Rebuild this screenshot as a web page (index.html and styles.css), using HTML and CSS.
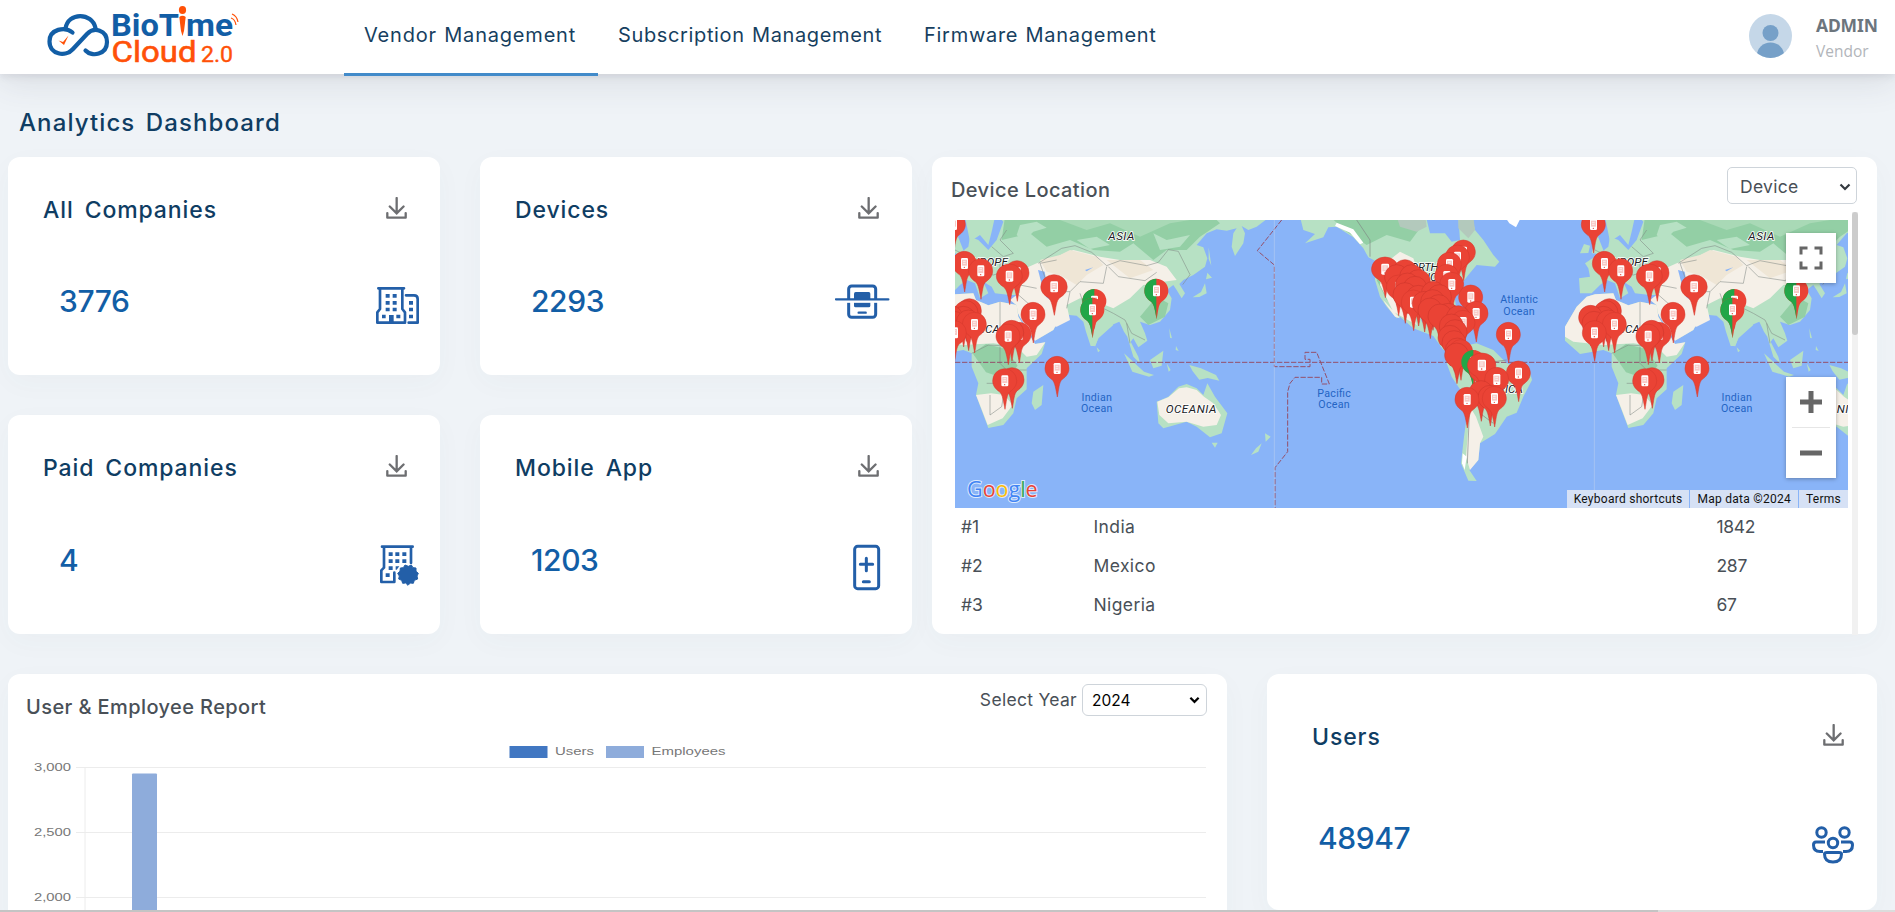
FILE: index.html
```html
<!DOCTYPE html>
<html lang="en">
<head>
<meta charset="utf-8">
<title>BioTime Cloud 2.0</title>
<link rel="stylesheet" href="styles.css">
</head>
<body>
<svg class="defs" width="0" height="0">
  <defs>
    <symbol id="download" viewBox="0 0 63 67">
      <path d="M32 3v46M11 29l21 21 21-21" fill="none" stroke="#6d6e71" stroke-width="7" stroke-linecap="round"/>
      <path d="M3.500 49v14h56V49" fill="none" stroke="#6d6e71" stroke-width="7" stroke-linecap="round" stroke-linejoin="round"/>
    </symbol>
    <g id="phone"><rect x="-10" y="-16" width="21" height="33" rx="4" fill="#fff"/><rect x="-7" y="-11" width="15" height="18" fill="#f8c9c5"/><path d="M-4-6h8M-4 0h8" stroke="#fff" stroke-width="2"/><circle cy="12" r="2" fill="#ea4335"/></g>
    <path id="drop" d="M-36 0a36 36 0 0 1 72 0c0 16-9 25-20 33C6 40 5 66 1 86-3 66-6 40-16 33-27 25-36 16-36 0z"/>
    <g id="pin"><use href="#drop" fill="#ea4335" stroke="#d5382c" stroke-width="1.5"/><use href="#phone"/></g>
    <g id="dot"><use href="#drop" fill="#ea4335" stroke="#c9352a" stroke-width="1.5"/></g>
    <clipPath id="lefthalf"><rect x="-40" y="-40" width="40" height="130"/></clipPath>
    <g id="split"><use href="#drop" fill="#ea4335"/><use href="#drop" fill="#22a648" clip-path="url(#lefthalf)"/><use href="#phone"/></g>
    <g id="oldworld">
      <path fill="#b7e1c4" d="M1050 200L1010 230 985 240 965 228 975 250 970 280 945 318 935 290 940 250 950 235 920 242 890 238 860 250 830 285 850 292 862 325 855 350 820 375 790 390 778 402 795 430 785 445 770 420 760 405 740 420 755 445 750 480 720 515 690 525 660 515 675 550 682 572 655 592 640 565 632 575 655 620 660 640 640 620 622 560 612 545 598 515 575 525 535 565 525 588 512 588 498 545 490 515 470 497 420 492 390 470 350 450 340 448 375 490 415 512 400 540 345 572 300 500 285 470 300 455 300 435 270 435 225 430 215 410 190 395 205 430 180 445 165 400 140 390 120 405 95 430 60 430 57 385 90 380 85 355 75 340 120 310 145 290 150 260 175 270 205 300 230 270 250 215 235 200z"/>
      <path fill="#b7e1c4" d="M135 200L150 275 180 255 205 285 215 245 225 200zM60 310l12-28 18 5-5 22zM95 310l15-60 20 50-10 12z"/>
      <path fill="#93cfa5" d="M255 200L245 270 330 250 380 290 450 270 520 300 600 305 640 280 700 330 740 300 800 300 840 260 900 220 880 200zM660 500l50-60 35 20-10 40-50 25z"/>
      <path fill="#a9d9b6" d="M420 210l80 30 70-20 90 40 90-40 60-10-120-10z"/>
      <path fill="#b7e1c4" d="M300 225l50-10 30 18-40 12-30 30-20-20zM470 270l60-10 40 25-60 12zM700 250l40 20 70-15-30 35-60 10z"/>
      <path fill="#f5f0e8" d="M350 340l60-20 50-20 80 20 60 10 90 0 50 20 30 40-40 5-60 10-40 40-50 30-50-20-50-10-40 20 10 45-40 20-60-10-30-30-50-40 40-30-30-20-20-20z"/>
      <path fill="#f5f0e8" d="M300 405l60 10 30 45-40-8-10 0 35 38 40 22-15 28-55 32-45-70-15-30 15-20z"/>
      <path fill="#efe6d6" d="M360 330l60-15 30-15 80 20 20 25-50 30-30 30-50-30-40-10zM560 330l100 0 40 30-70 25z"/>
      <path fill="#b7e1c4" d="M500 520l15-60 50 40 15 25-45 40-10 25z"/>
      <path fill="#b7e1c4" d="M80 440L105 433 160 430 168 450 205 466 240 455 290 465 295 500 345 582 376 577 365 612 320 655 320 718 290 745 280 790 250 825 205 834 180 768 168 735 175 700 155 650 155 610 130 600 60 612 15 572 15 530 50 470z"/>
      <path fill="#f5f0e8" d="M80 440L105 433 160 430 168 450 205 466 240 455 290 465 295 500 345 582 376 577 350 615 320 620 290 590 220 580 130 585 40 575 15 560 15 530 50 470zM168 735l45-5 40 5 25 30-30 40-45 20-23-60z"/>
      <path fill="#93cfa5" d="M158 610l40-28 60 15 35 50-35 40-60-20z"/>
      <path fill="#89b4f8" d="M354 360l20 5 5 30 12 55-12-8-18-55zM495 360l25-8-20 12z"/>
      <path fill="#b7e1c4" d="M370 705l-5 60-20 15-10-20 5-35zM612 610l60 55 30 10-15 5-50-15zM690 630l40-28-5 45-25 8zM740 640l12 20-6 5zM808 645l35 10 45 20 10 17-35-8-25 5-20-25zM748 535l8 30-6-2zM768 588l8 15-9-3zM855 400l5 30-22 11-20 1 25-16zM862 368l14 15-18 5zM530 592l10 10-6 5zM875 878l18 0-8 15zM1035 850l17 10-15 15zM1025 880l-10 25-22 10 15-20zM866 292l8 55-8-20z"/>
      <path fill="#b7e1c4" d="M710 755L745 740 775 710 800 702 830 715 850 735 862 700 885 740 922 790 905 850 870 862 830 830 800 815 730 835 715 820 712 780z"/>
      <path fill="#f5f0e8" d="M712 755L745 742 777 715 800 712 830 720 852 740 880 760 903 795 890 825 850 830 800 815 745 820 718 795z"/>
      <path fill="none" stroke="#7e8783" stroke-width="2" opacity=".8" d="M355 340l70-45 40-8 50 20 45 40 40-15 80 15 35-10 30-38 30 5 20 40 15 30-22 30M565 350l30 30 80 12 35-25M410 330l-50 10 30 85 60 0 30-30 70 5 10-50M450 425l-10 50M480 430l20 60 20-30 60 30 35 20 20 40 40 20M620 520l10 60M155 610l50-25 90 5M240 455v85M200 700l55 0 35-40 30 0M210 735l0 60M250 740l-5 30-35 25M240 590l0 50 40 40M300 405l50 10M290 430l40 35M215 290l35 30 30-10M240 320l0 60M160 360l60 15 50-15M105 300l60 30M260 240l-20 30 40 40"/>
      <g class="place"><text x="604" y="269" textLength="78">ASIA</text><text x="200" y="349" textLength="128">EUROPE</text><text x="180" y="548" textLength="120">AFRICA</text><text x="813" y="788" textLength="152">OCEANIA</text></g>
      <g class="sea"><text x="530" y="754" textLength="91">Indian</text><text x="530" y="786" textLength="94">Ocean</text></g>
    </g>
    <g id="oldpins">
      <use href="#pin" x="100" y="223"/><use href="#pin" x="133" y="340"/><use href="#pin" x="182" y="362"/><use href="#pin" x="291" y="368"/><use href="#pin" transform="translate(268 378) scale(1.08 1)"/>
      <use href="#pin" transform="translate(402 410) scale(1.1 1)"/><use href="#pin" x="339" y="493"/>
      <use href="#dot" x="148" y="482"/><use href="#dot" x="138" y="488"/><use href="#dot" x="130" y="505"/><use href="#dot" x="92" y="502"/><use href="#dot" x="102" y="520"/><use href="#dot" x="145" y="516"/><use href="#pin" x="163" y="523"/><use href="#pin" x="103" y="548"/>
      <use href="#pin" x="297" y="553"/><use href="#dot" x="275" y="547"/><use href="#pin" x="264" y="558"/><use href="#pin" x="411" y="655"/><use href="#dot" x="276" y="689"/><use href="#pin" x="254" y="692"/>
      <use href="#split" x="523" y="453"/><use href="#split" x="517" y="479"/><use href="#split" x="709" y="422"/>
    </g>
  </defs>
</svg>

<header class="topbar">
  <svg class="logo" width="204" height="66" viewBox="40 4 204 66">
    <g fill="none" stroke="#125ea6" stroke-width="4.2" stroke-linecap="round">
      <path d="M72.500 32.500C65 26 49.500 29 49.500 41.500 49.500 54.500 65.500 57.500 73 49L87 34C94 26.500 107 30 107 42 107 54.500 92 57.500 85.500 50.500"/>
      <path d="M65.500 28.500C68 12 92 12 95.500 28"/>
    </g>
    <path d="M58.500 40.500l4.500 1.500 5.500-6.500-4.500 9.500z" fill="#ff5108"/>
    <text class="logo-bio" x="111" y="36" textLength="68" lengthAdjust="spacingAndGlyphs">BioT</text>
    <text class="logo-bio" x="186" y="36" textLength="47" lengthAdjust="spacingAndGlyphs">me</text>
    <ellipse cx="182.500" cy="10" rx="3.600" ry="4" fill="#ff5108"/><path d="M179.300 17q3.200-2.500 6.400 0l-1.700 14-1.500 5-1.500-5z" fill="#ff5108"/>
    <path d="M231 18q4 1 5 7M232 14q5 2 6 8" fill="none" stroke="#ff5108" stroke-width="1.200"/>
    <text class="logo-cloud" x="111.500" y="61.500" textLength="85" lengthAdjust="spacingAndGlyphs">Cloud</text>
    <text class="logo-version" x="201" y="61.500" textLength="32" lengthAdjust="spacingAndGlyphs">2.0</text>
  </svg>
  <nav class="nav">
    <a class="nav-link active">Vendor Management</a>
    <a class="nav-link n2">Subscription Management</a>
    <a class="nav-link n3">Firmware Management</a>
  </nav>
  <div class="account">
    <svg width="43" height="44" viewBox="0 0 43 44"><defs><clipPath id="face"><ellipse cx="21.500" cy="22" rx="21.500" ry="22"/></clipPath></defs><g clip-path="url(#face)"><path fill="#c5d7e8" d="M0 0h43v44H0z"/><circle cx="21.500" cy="19" r="8" fill="#76a0c8"/><ellipse cx="21.500" cy="41" rx="13.500" ry="12.500" fill="#76a0c8"/></g></svg>
    <div><div class="account-name">ADMIN</div><div class="account-role">Vendor</div></div>
  </div>
</header>

<main>
  <h1 class="page-title">Analytics Dashboard</h1>
  <div class="overview">
    <section class="card stat">
      <div class="stat-head"><h2>All Companies</h2><svg class="dl" width="21" height="22"><use href="#download"/></svg></div>
      <div class="stat-body"><span class="value">3776</span>
        <svg width="60" height="52" viewBox="1089 398 180 156"><g fill="none" stroke="#235fa8" stroke-width="8" stroke-linejoin="round" stroke-linecap="round"><path d="M1135 414H1212M1140 416v60l-8 10v31h83v-31l-8-10v-60"/><path d="M1218 435h24q11 0 11 11v71h-27"/></g><path fill="#235fa8" d="M1157 431h12v11h-12zM1178 431h12v11h-12zM1157 452h12v11h-12zM1178 452h12v11h-12zM1157 472h12v11h-12zM1178 472h12v11h-12zM1146 493h11v11h-11zM1189 493h12v11h-12zM1167 494h14v23h-14zM1227 452h12v11h-12zM1227 472h12v11h-12zM1227 493h12v11h-12z"/></svg></div>
    </section>
    <section class="card stat">
      <div class="stat-head"><h2>Devices</h2><svg class="dl" width="21" height="22"><use href="#download"/></svg></div>
      <div class="stat-body"><span class="value">2293</span>
        <svg width="60" height="52" viewBox="1095 399 180 156"><rect x="1136" y="408" width="81" height="94" rx="9" fill="none" stroke="#235fa8" stroke-width="9"/><rect x="1152" y="426" width="49" height="46" rx="5" fill="#235fa8"/><path d="M1130 454h94" stroke="#fff" stroke-width="9"/><path d="M1098 448h157" stroke="#235fa8" stroke-width="7" stroke-linecap="round"/><path d="M1166 488h21" stroke="#235fa8" stroke-width="7" stroke-linecap="round"/></svg></div>
    </section>
    <section class="card stat">
      <div class="stat-head"><h2>Paid Companies</h2><svg class="dl" width="21" height="22"><use href="#download"/></svg></div>
      <div class="stat-body"><span class="value">4</span>
        <svg width="60" height="52" viewBox="1089 395 180 156"><g fill="none" stroke="#235fa8" stroke-width="8" stroke-linejoin="round" stroke-linecap="round"><path d="M1146 409h92M1152 412v60l-8 8v35h39v-28M1233 412v46"/></g><path fill="#235fa8" d="M1166 426h12v11h-12zM1186 426h12v11h-12zM1207 426h12v11h-12zM1166 447h12v11h-12zM1186 447h12v11h-12zM1207 447h12v11h-12zM1166 468h12v11h-12zM1157 489h12v11h-12zM1187 468h11l-8 10h-3z"/><path fill="#235fa8" stroke="#235fa8" stroke-width="3" stroke-linejoin="round" d="M1225 468l9-4 5 8 9 1 0 10 7 6-4 8 2 9-10 4-3 9-9-1-7 7-7-7-9 1-3-9-9-4 2-9-5-8 7-6 1-10 9-1 5-8z"/></svg></div>
    </section>
    <section class="card stat">
      <div class="stat-head"><h2>Mobile App</h2><svg class="dl" width="21" height="22"><use href="#download"/></svg></div>
      <div class="stat-body"><span class="value">1203</span>
        <svg width="60" height="52" viewBox="1095 396 180 156"><g fill="none" stroke="#235fa8" stroke-width="9"><rect x="1154" y="409" width="72" height="127" rx="9"/><path stroke-linecap="round" d="M1171 463h37M1189 445v37M1180 515h18"/></g></svg></div>
    </section>

    <section class="card location">
      <div class="location-head"><h3>Device Location</h3>
        <div class="select device-select">Device<svg width="12" height="8" viewBox="0 0 12 8"><path d="M1.500 1.500L6 6l4.500-4.500" fill="none" stroke="#343a40" stroke-width="2.200"/></svg></div></div>
      <div class="scroller">
        <div class="scroller-content">
          <div class="map">
            <svg width="893" height="288" viewBox="0 0 2679 864">
              <path fill="#89b4f8" d="M0 0h2679v864H0z"/>
              <g transform="translate(-105 -210)">
                <g transform="translate(1380 0)">
                  <path fill="#b7e1c4" d="M-240 200L-230 240-195 252-225 280-170 262-155 232-130 230-80 262-50 295-35 322-15 332-15 390 0 440 20 470 50 505 60 500 100 535 160 558 190 600 220 605 205 590 185 570 190 515 160 530 125 515 118 480 130 460 180 450 210 465 230 482 222 430 265 375 290 345 345 350 358 335 340 315 310 270 285 240 275 200 235 200 240 270 215 275 195 250 150 250 138 200z"/>
                  <path fill="#93cfa5" d="M-150 200l50 45 60 40 60-30 70 20 30-40-10-35zM-10 390l30 60 20 10-10-90z"/>
                  <path fill="#b3c9bc" d="M50 200l10 30 50 15 30-15-4-30zM235 200l45 0 5 40-20 25-30-30z"/>
                  <path fill="#f5f0e8" d="M10 345l50-40 40 20 20 60-20 90 10 50-70-40-40-80zM10 450l50 55-15-5-30-40z"/>
                  <path fill="#fff" d="M380 208h40l-12 24-20-12zM-130 218l50 20 30 40-10 5-30-35-45-20z"/>
                  <path fill="#b7e1c4" d="M215 600L250 588 290 580 340 600 380 640 450 668 456 690 430 740 410 788 380 800 345 852 300 880 295 930 268 960 290 993 265 992 243 940 252 860 265 765 255 740 215 680 200 640z"/>
                  <path fill="#f5f0e8" d="M270 770l18 30 22 60-10 20-5 50-25 30-12-40 8-100z"/><path fill="#fff" d="M248 910l12 10-6 40-8-20z"/>
                  <path fill="none" stroke="#7e8783" stroke-width="2" d="M268 790l-6 150M285 600l20 40 75-10M300 790l40 30M-70 210l40 60 0 50"/>
                  <g class="place"><text x="122" y="362" textLength="108">NORTH</text><text x="122" y="394" textLength="145">AMERICA</text><text x="356" y="728" textLength="145">AMERICA</text></g>
                  <g class="sea"><text x="417" y="460" textLength="113">Atlantic</text><text x="417" y="494" textLength="94">Ocean</text></g>
                </g>
                <use href="#oldworld"/><use href="#oldworld" x="1920"/>
                <path d="M105 637H2784M1085 210L1012 302 1063 345V650H1170V628H1155V607H1190L1228 702H1205V682H1125L1110 700 1103 725V905L1065 953V1074" fill="none" stroke="#94506a" stroke-width="3" stroke-dasharray="16 5"/>
                <path d="M1063 210V1074M2023 640V1074" stroke="#c4d5ee" stroke-width="2" opacity=".7"/>
                <g class="sea"><text x="1242" y="741" textLength="101">Pacific</text><text x="1242" y="775" textLength="94">Ocean</text></g>
                <use href="#oldpins"/><use href="#oldpins" x="1920"/>
                <g transform="translate(1380 0)">
                  <use href="#pin" x="250" y="306"/><use href="#pin" x="232" y="321"/><use href="#pin" x="208" y="343"/><use href="#pin" x="200" y="379"/><use href="#pin" x="215" y="403"/>
                  <use href="#pin" transform="translate(15 357) scale(1.12 1)"/><use href="#dot" x="75" y="365"/><use href="#dot" x="50" y="380"/><use href="#dot" x="95" y="380"/><use href="#dot" x="115" y="395"/><use href="#pin" x="55" y="411"/><use href="#dot" x="82" y="405"/><use href="#dot" x="105" y="415"/>
                  <use href="#dot" x="75" y="434"/><use href="#dot" x="115" y="442"/><use href="#dot" x="160" y="430"/><use href="#dot" x="178" y="440"/><use href="#pin" x="100" y="456"/><use href="#dot" x="133" y="460"/><use href="#dot" x="158" y="455"/><use href="#dot" x="176" y="470"/><use href="#dot" x="150" y="480"/>
                  <use href="#pin" x="272" y="441"/><use href="#pin" x="288" y="490"/><use href="#dot" x="205" y="496"/><use href="#dot" x="180" y="498"/><use href="#dot" x="235" y="503"/><use href="#pin" x="249" y="517"/><use href="#dot" x="214" y="528"/><use href="#dot" x="225" y="545"/><use href="#dot" x="210" y="562"/><use href="#dot" x="222" y="578"/><use href="#dot" x="232" y="600"/><use href="#pin" x="242" y="605"/><use href="#dot" x="230" y="615"/>
                  <use href="#pin" x="385" y="553"/><use href="#split" x="280" y="636"/><use href="#pin" x="415" y="669"/><use href="#dot" x="303" y="660"/><use href="#pin" transform="translate(305 645) scale(1.18 1)"/><use href="#pin" x="350" y="688"/>
                  <use href="#dot" x="303" y="728"/><use href="#dot" x="330" y="742"/><use href="#pin" x="261" y="748"/><use href="#pin" x="343" y="745"/>
                </g>
              </g>
              <g class="google"><text x="36" y="832" textLength="212" lengthAdjust="spacingAndGlyphs"><tspan fill="#4285f4">G</tspan><tspan fill="#ea4335">o</tspan><tspan fill="#fbbc05">o</tspan><tspan fill="#4285f4">g</tspan><tspan fill="#34a853">l</tspan><tspan fill="#ea4335">e</tspan></text></g>
            </svg>
            <div class="map-btn fullscreen"><svg width="24" height="24" viewBox="0 0 24 24"><path d="M2 8.500V2h6.500M15.500 2H22v6.500M22 15.500V22h-6.500M8.500 22H2v-6.500" fill="none" stroke="#666" stroke-width="3"/></svg></div>
            <div class="map-btn zoomer"><svg width="50" height="101" viewBox="0 0 50 101"><path d="M14 25h22M25 14v22M14 76h22" stroke="#666" stroke-width="5"/><path d="M6 50.500h38" stroke="#e6e6e6"/></svg></div>
            <div class="credits"><span>Keyboard shortcuts</span><span>Map data ©2024</span><span>Terms</span></div>
          </div>
          <div class="rank"><span>#1</span><span>India</span><span>1842</span></div>
          <div class="rank"><span>#2</span><span>Mexico</span><span>287</span></div>
          <div class="rank"><span>#3</span><span>Nigeria</span><span>67</span></div>
        </div>
        <div class="track"><div class="thumb"></div></div>
      </div>
    </section>
  </div>

  <div class="reports">
    <section class="card report">
      <div class="report-head"><h3>User &amp; Employee Report</h3>
        <div class="year"><span>Select Year</span><div class="select year-select">2024<svg width="11" height="8" viewBox="0 0 12 8"><path d="M1.500 1.500L6 6l4.500-4.500" fill="none" stroke="#000" stroke-width="2.400"/></svg></div></div></div>
      <svg class="chart" width="1219" height="180" viewBox="8 732 1219 180">
        <path d="M76 767.500H1206M76 832.500H1206M76 897.500H1206M85 767V912" stroke="#ececec" fill="none"/>
        <path d="M132 912V774.500q0-1 1-1h23q1 0 1 1V912z" fill="#8eacdb"/>
        <path fill="#4177c2" d="M509.500 746h38v12h-38z"/><path fill="#8eacdb" d="M606 746h38v12h-38z"/>
        <g class="chart-text"><text x="555" y="755" textLength="39" lengthAdjust="spacingAndGlyphs">Users</text><text x="651.500" y="755" textLength="74" lengthAdjust="spacingAndGlyphs">Employees</text>
        <text x="34" y="770.500" textLength="37" lengthAdjust="spacingAndGlyphs">3,000</text><text x="34" y="835.500" textLength="37" lengthAdjust="spacingAndGlyphs">2,500</text><text x="34" y="900.500" textLength="37" lengthAdjust="spacingAndGlyphs">2,000</text></g>
      </svg>
    </section>
    <section class="card users">
      <div class="stat-head"><h2>Users</h2><svg class="dl" width="21" height="22"><use href="#download"/></svg></div>
      <div class="stat-body"><span class="value">48947</span>
        <svg width="42" height="38" viewBox="0 0 42 38"><g fill="none" stroke="#235fa8" stroke-width="3"><circle cx="9.500" cy="6.500" r="4.700"/><circle cx="32.500" cy="6.500" r="4.700"/><circle cx="21" cy="17" r="4.700"/><path d="M13 16H4q-2.500 0-2.500 3 0 6.500 6.500 6.500h3M29 16h9q2.500 0 2.500 3 0 6.500-6.500 6.500h-3M15 26.500h12q2.500 0 2.500 1.500 0 8-8.500 8t-8.500-8q0-1.500 2.500-1.500z"/></g></svg></div>
    </section>
  </div>
</main>
<div class="hscroll"><div class="hthumb"></div></div>
</body>
</html>
```

FILE: styles.css
```css
* { box-sizing: border-box; }
body { margin: 0; width: 1895px; height: 912px; overflow: hidden; background: #eff3f7; font-family: Inter, "Open Sans", sans-serif; color: #495057; position: relative; }
h1, h2, h3 { margin: 0; font-weight: 500; }
svg { display: block; flex: none; }
.defs { position: absolute; }

.topbar { height: 74px; display: flex; background: #fff; position: relative; z-index: 1; box-shadow: 0 10px 34px rgba(65, 65, 80, .11), 0 2px 8px rgba(65, 65, 80, .12); }
.logo { margin: 4px 0 0 40px; }
.logo-bio { font: 700 32px Roboto, sans-serif; fill: #125ea6; }
.logo-cloud { font: 400 29px Roboto, sans-serif; fill: #ff5108; stroke: #ff5108; stroke-width: .6; }
.logo-version { font: 400 22px Roboto, sans-serif; fill: #ff5108; stroke: #ff5108; stroke-width: .4; }
.nav { display: flex; margin-left: 100px; height: 76px; }
.nav-link { width: 254px; padding: 0 0 5px 20px; line-height: 70px; font-size: 20px; letter-spacing: .8px; word-spacing: 1px; color: #173f5f; white-space: nowrap; border-bottom: 3px solid transparent; }
.nav-link.active { border-color: #428bca; }
.n2 { width: 306px; letter-spacing: .64px; }
.n3 { width: 274px; letter-spacing: .72px; }
.account { margin-left: auto; width: 146px; display: flex; gap: 25px; padding-top: 14px; font-family: "Noto Sans", "Open Sans", sans-serif; }
.account-name { font-size: 17.500px; font-weight: 700; line-height: 22px; margin-left: -1px; letter-spacing: -.15px; color: #6c757d; }
.account-role { font-family: "Open Sans", sans-serif; font-size: 15.500px; line-height: 30px; margin-left: -1px; color: #b2b5ba; }

.page-title { padding: 28px 0 0 19px; height: 83px; font-size: 24px; line-height: 41px; letter-spacing: 1.1px; word-spacing: 3px; color: #0f3d63; }
.overview { display: grid; grid-template-columns: 432px 432px 945px; grid-template-rows: 218px 219px; column-gap: 40px; row-gap: 40px; padding-left: 8px; }
.card { background: #fff; border-radius: 12px; box-shadow: 0 8px 28px rgba(60, 80, 110, .03); }
.stat { display: flex; flex-direction: column; justify-content: space-between; padding: 36px 17px 40px 35px; }
.stat-head { display: flex; justify-content: space-between; align-items: flex-start; padding-right: 16px; }
.stat-head h2 { font-size: 23px; line-height: 34px; letter-spacing: .9px; word-spacing: 4px; color: #0f3d63; }
.dl { margin-top: 4px; }
.stat-body { display: flex; justify-content: space-between; align-items: flex-start; padding-left: 16px; }
.value { font-size: 30px; line-height: 36px; font-weight: 500; letter-spacing: -.4px; color: #125ea6; }

.location { grid-column: 3; grid-row: 1 / 3; margin-left: -20px; width: 945px; }
.location-head { display: flex; justify-content: space-between; padding: 10px 20px 0 19px; height: 55px; }
h3 { font-size: 20px; line-height: 46px; letter-spacing: .4px; color: #495057; }
.select { display: flex; align-items: center; justify-content: space-between; background: #fff; border: 1px solid #ced4da; border-radius: 5px; }
.device-select { width: 130px; height: 37px; padding: 2px 5px 0 12px; font-size: 17.500px; letter-spacing: .3px; }
.scroller { display: flex; height: 423px; }
.scroller-content { width: 920px; padding: 8px 4px 0 23px; }
.track { width: 6px; background: #f1f1f1; }
.thumb { height: 123px; border-radius: 3px; background: #ccc; }
.map { position: relative; width: 893px; height: 288px; overflow: hidden; }
.place { font: italic 400 35px Roboto, sans-serif; fill: #202124; stroke: #fff; stroke-width: 5px; paint-order: stroke; text-anchor: middle; }
.sea { font: 400 32px Roboto, sans-serif; fill: #2464c4; text-anchor: middle; }
.google { font: 500 68px "Open Sans", sans-serif; stroke: #dce9fc; stroke-width: 6px; paint-order: stroke; }
.map-btn { position: absolute; right: 12px; width: 50px; background: #fff; box-shadow: 0 1px 4px rgba(0, 0, 0, .3); }
.fullscreen { top: 13px; height: 50px; padding: 13px; }
.zoomer { top: 157px; height: 101px; }
.credits { position: absolute; right: 0; bottom: 0; display: flex; gap: 1px; height: 18px; font: 12px/19px Roboto, sans-serif; color: #111; white-space: nowrap; }
.credits span { padding: 0 7px; background: #d6e1f5; letter-spacing: .26px; }
.rank { display: grid; grid-template-columns: 132.500px 623px 1fr; height: 39px; padding-left: 6px; font-size: 17.500px; line-height: 38px; }
.rank span:nth-child(2) { letter-spacing: .4px; }
.rank span:nth-child(3) { letter-spacing: -.3px; }

.reports { display: flex; gap: 40px; padding: 40px 0 0 8px; }
.report { width: 1219px; height: 260px; }
.report-head { display: flex; justify-content: space-between; height: 58px; padding: 10px 20px 0 18px; }
.year { display: flex; gap: 5px; font-size: 17.500px; line-height: 31px; letter-spacing: .3px; }
.year-select { width: 125px; height: 32px; padding: 0 6px 0 9px; font-size: 15.500px; letter-spacing: 0; color: #000; border-radius: 6px; }
.chart-text { font: 11.500px "Liberation Sans", Arial, sans-serif; fill: #777; }
.users { width: 610px; height: 236px; padding: 46px 23px 0 45px; display: flex; flex-direction: column; gap: 66px; }
.users .stat-head { padding-right: 10px; }
.users .stat-body { padding-left: 6px; }
.users .stat-body svg { margin-top: 6px; }
.hscroll { position: absolute; left: 0; right: 0; bottom: 0; height: 2px; background: #dcdcdc; }
.hthumb { width: 1658px; height: 2px; background: #c4c4c4; }
```
